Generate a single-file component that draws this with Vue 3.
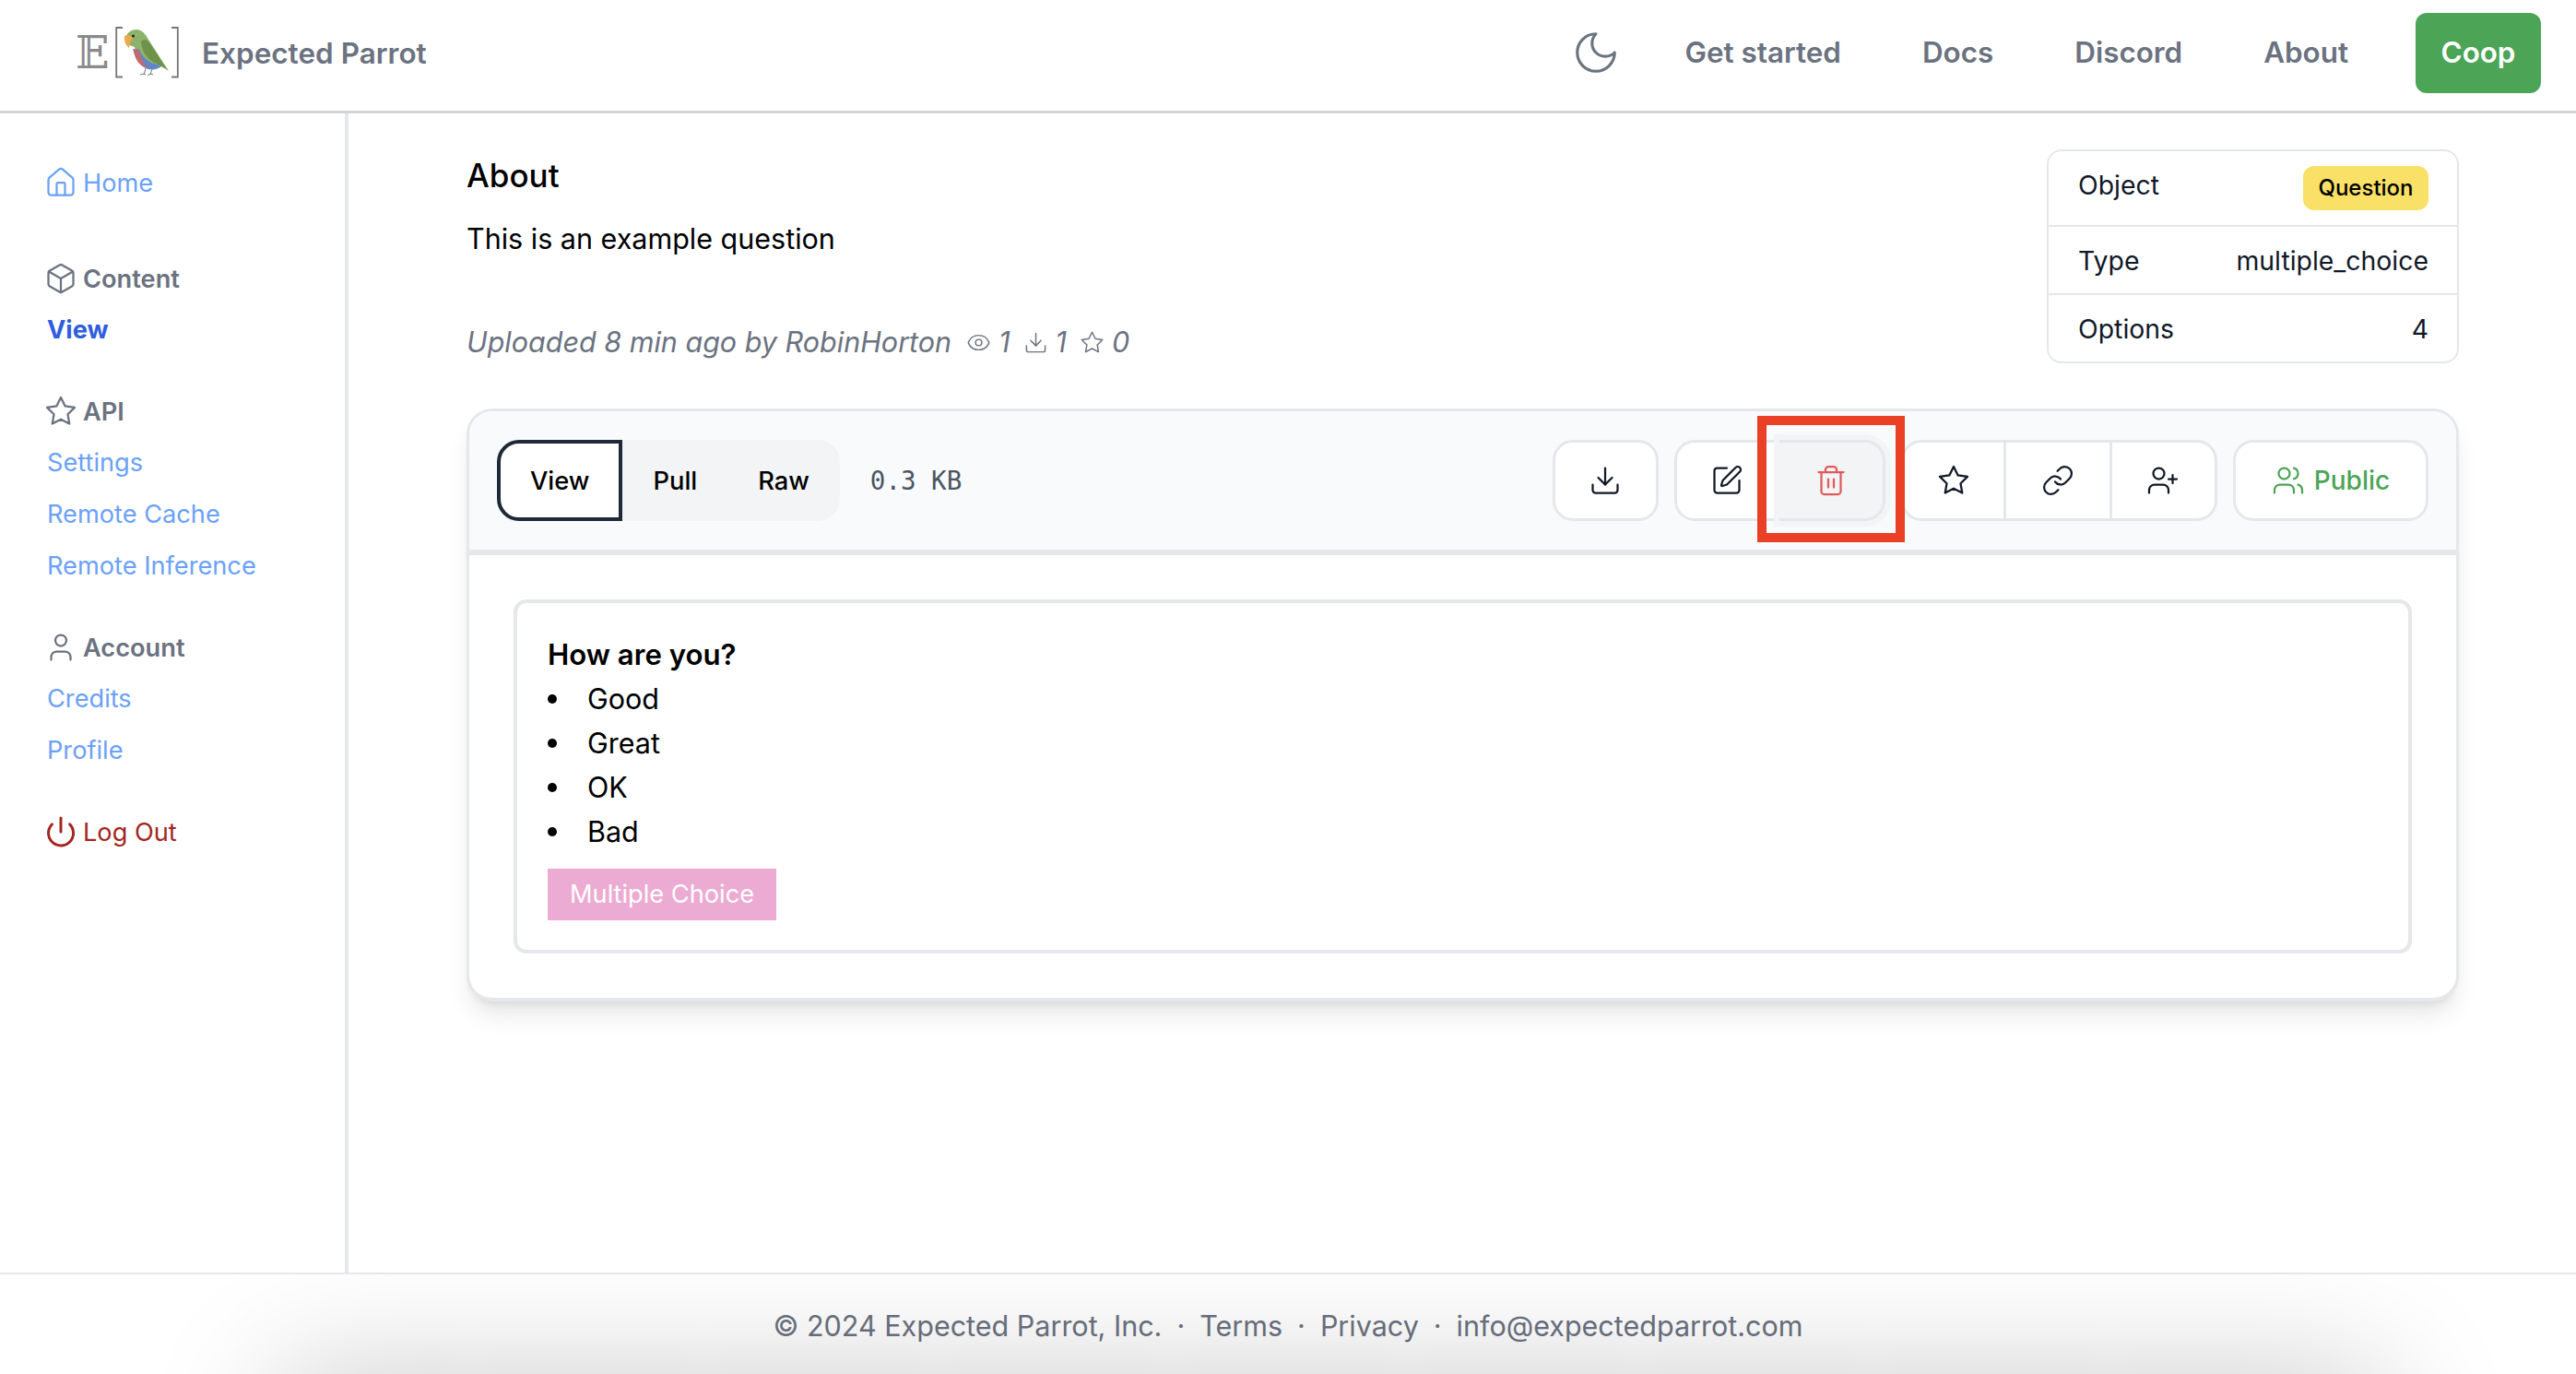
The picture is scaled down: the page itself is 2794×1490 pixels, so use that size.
<script setup>
const sections = [
  { title: "Content", links: [{ label: "View", active: true }] },
  { title: "API", links: [{ label: "Settings" }, { label: "Remote Cache" }, { label: "Remote Inference" }] },
  { title: "Account", links: [{ label: "Credits" }, { label: "Profile" }] },
];
const navLinks = ["Get started", "Docs", "Discord", "About"];
const options = ["Good", "Great", "OK", "Bad"];
</script>

<template>
  <div class="page">
    <header class="topbar">
      <a class="brand">
        <span class="logo-e">𝔼</span>
        <svg class="logo-mark" viewBox="0 0 69 56" fill="none">
          <path d="M8 1H1.2V54.5H8M61 1H67.8V54.5H61" stroke="#767676" stroke-width="1.8" />
          <path d="M11 15C11 7 17 3 23 3C29 3 33 8 36 14L58 48L50 43C46 46 40 47 35 45C28 42 22 32 21 22C16 20 11 19 11 15Z" fill="#8cb26b" />
          <path d="M19 24C22 36 28 44 36 46C41 47 46 46 50 43L46 41C38 40 30 34 26 25Z" fill="#5f87c6" />
          <path d="M20 25C21 36 27 43 35 45C31 40 27 32 25 24Z" fill="#c4686f" />
          <path d="M28 16C31 12 36 14 39 20L56 46L49 42C38 38 29 30 28 16Z" fill="#6f9249" />
          <path d="M10 10C14 8 18 10 20 13C17 14 16 17 15 23C12 21 9 15 10 10Z" fill="#eca94a" />
          <circle cx="19.5" cy="10" r="1.5" fill="#222" />
          <path d="M33 45L31 52M31 51L27 52M31 51L33 52M40 46L38 52M38 51L35 53M38 51L41 52" stroke="#777" stroke-width="1" />
        </svg>
        <span class="brand-name">Expected Parrot</span>
      </a>
      <nav class="topnav">
        <svg class="moon" viewBox="0 0 24 24" fill="none" stroke="currentColor" stroke-width="1.4" stroke-linecap="round" stroke-linejoin="round">
          <path d="M12 3a6 6 0 0 0 9 9 9 9 0 1 1-9-9Z" />
        </svg>
        <a v-for="link in navLinks" :key="link" class="nav-link">{{ link }}</a>
        <button class="coop">Coop</button>
      </nav>
    </header>

    <div class="middle">
      <aside class="sidebar">
        <a class="side-row home">
          <svg class="icon" viewBox="0 0 24 24">
            <path d="M15 21v-8a1 1 0 0 0-1-1h-4a1 1 0 0 0-1 1v8" />
            <path d="M3 10a2 2 0 0 1 .709-1.528l7-5.999a2 2 0 0 1 2.582 0l7 5.999A2 2 0 0 1 21 10v9a2 2 0 0 1-2 2H5a2 2 0 0 1-2-2z" />
          </svg>
          Home
        </a>
        <section v-for="section in sections" :key="section.title" class="side-section">
          <div class="side-row side-title">
            <svg v-if="section.title === 'Content'" class="icon" viewBox="0 0 24 24">
              <path d="M21 8a2 2 0 0 0-1-1.73l-7-4a2 2 0 0 0-2 0l-7 4A2 2 0 0 0 3 8v8a2 2 0 0 0 1 1.73l7 4a2 2 0 0 0 2 0l7-4A2 2 0 0 0 21 16Z" />
              <path d="m3.3 7 8.7 5 8.7-5" />
              <path d="M12 22V12" />
            </svg>
            <svg v-else-if="section.title === 'API'" class="icon" viewBox="0 0 24 24">
              <polygon points="12 2 15.09 8.26 22 9.27 17 14.14 18.18 21.02 12 17.77 5.82 21.02 7 14.14 2 9.27 8.91 8.26 12 2" />
            </svg>
            <svg v-else class="icon" viewBox="0 0 24 24">
              <path d="M19 21v-2a4 4 0 0 0-4-4H9a4 4 0 0 0-4 4v2" />
              <circle cx="12" cy="7" r="4" />
            </svg>
            {{ section.title }}
          </div>
          <a
            v-for="link in section.links"
            :key="link.label"
            class="side-link"
            :class="{ active: link.active }"
          >{{ link.label }}</a>
        </section>
        <a class="side-row logout">
          <svg class="icon" viewBox="0 0 24 24">
            <path d="M12 2v10" />
            <path d="M18.4 6.6a9 9 0 1 1-12.77.04" />
          </svg>
          Log Out
        </a>
      </aside>

      <main class="content">
        <div class="summary">
          <div class="about">
            <h2>About</h2>
            <p class="description">This is an example question</p>
            <p class="meta">
              Uploaded 8 min ago by RobinHorton
              <svg class="meta-icon eye" viewBox="0 0 24 24">
                <path d="M2.062 12.348a1 1 0 0 1 0-.696 10.75 10.75 0 0 1 19.876 0 1 1 0 0 1 0 .696 10.75 10.75 0 0 1-19.876 0" />
                <circle cx="12" cy="12" r="3" />
              </svg>
              <span>1</span>
              <svg class="meta-icon" viewBox="0 0 24 24">
                <path d="M21 15v4a2 2 0 0 1-2 2H5a2 2 0 0 1-2-2v-4" />
                <polyline points="7 10 12 15 17 10" />
                <line x1="12" y1="15" x2="12" y2="3" />
              </svg>
              <span>1</span>
              <svg class="meta-icon" viewBox="0 0 24 24">
                <polygon points="12 2 15.09 8.26 22 9.27 17 14.14 18.18 21.02 12 17.77 5.82 21.02 7 14.14 2 9.27 8.91 8.26 12 2" />
              </svg>
              <span>0</span>
            </p>
          </div>
          <div class="facts">
            <div class="fact first"><span>Object</span><span class="badge">Question</span></div>
            <div class="fact"><span>Type</span><span>multiple_choice</span></div>
            <div class="fact"><span>Options</span><span>4</span></div>
          </div>
        </div>

        <div class="card">
          <div class="toolbar">
            <div class="tabs">
              <button class="tab current">View</button>
              <button class="tab">Pull</button>
              <button class="tab">Raw</button>
            </div>
            <span class="size">0.3 KB</span>

            <div class="actions">
              <div class="group">
                <button class="tool">
                  <svg class="icon" viewBox="0 0 24 24">
                    <path d="M21 15v4a2 2 0 0 1-2 2H5a2 2 0 0 1-2-2v-4" />
                    <polyline points="7 10 12 15 17 10" />
                    <line x1="12" y1="15" x2="12" y2="3" />
                  </svg>
                </button>
              </div>
              <div class="group">
                <button class="tool">
                  <svg class="icon" viewBox="0 0 24 24">
                    <path d="M12 3H5a2 2 0 0 0-2 2v14a2 2 0 0 0 2 2h14a2 2 0 0 0 2-2v-7" />
                    <path d="M18.375 2.625a1 1 0 0 1 3 3l-9.013 9.014a2 2 0 0 1-.853.505l-2.873.84a.5.5 0 0 1-.62-.62l.84-2.873a2 2 0 0 1 .506-.852z" />
                  </svg>
                </button>
                <button class="tool delete">
                  <svg class="icon" viewBox="0 0 24 24">
                    <path d="M3 6h18" />
                    <path d="M19 6v14c0 1-1 2-2 2H7c-1 0-2-1-2-2V6" />
                    <path d="M8 6V4c0-1 1-2 2-2h4c1 0 2 1 2 2v2" />
                    <line x1="10" y1="11" x2="10" y2="17" />
                    <line x1="14" y1="11" x2="14" y2="17" />
                  </svg>
                  <span class="callout"></span>
                </button>
              </div>
              <div class="group">
                <button class="tool">
                  <svg class="icon" viewBox="0 0 24 24">
                    <polygon points="12 2 15.09 8.26 22 9.27 17 14.14 18.18 21.02 12 17.77 5.82 21.02 7 14.14 2 9.27 8.91 8.26 12 2" />
                  </svg>
                </button>
                <button class="tool">
                  <svg class="icon" viewBox="0 0 24 24">
                    <path d="M10 13a5 5 0 0 0 7.54.54l3-3a5 5 0 0 0-7.07-7.07l-1.72 1.71" />
                    <path d="M14 11a5 5 0 0 0-7.54-.54l-3 3a5 5 0 0 0 7.07 7.07l1.71-1.71" />
                  </svg>
                </button>
                <button class="tool">
                  <svg class="icon" viewBox="0 0 24 24">
                    <path d="M16 21v-2a4 4 0 0 0-4-4H6a4 4 0 0 0-4 4v2" />
                    <circle cx="9" cy="7" r="4" />
                    <line x1="19" y1="8" x2="19" y2="14" />
                    <line x1="22" y1="11" x2="16" y2="11" />
                  </svg>
                </button>
              </div>
              <button class="public">
                <svg class="icon" viewBox="0 0 24 24">
                  <path d="M16 21v-2a4 4 0 0 0-4-4H6a4 4 0 0 0-4 4v2" />
                  <circle cx="9" cy="7" r="4" />
                  <path d="M22 21v-2a4 4 0 0 0-3-3.87" />
                  <path d="M16 3.13a4 4 0 0 1 0 7.75" />
                </svg>
                Public
              </button>
            </div>
          </div>

          <div class="card-body">
            <div class="question">
              <div class="question-text">How are you?</div>
              <ul>
                <li v-for="option in options" :key="option">{{ option }}</li>
              </ul>
              <span class="pill">Multiple Choice</span>
            </div>
          </div>
        </div>
      </main>
    </div>

    <footer class="footer">
      <span>© 2024 Expected Parrot, Inc.</span>
      <span class="dot">·</span>
      <a>Terms</a>
      <span class="dot">·</span>
      <a>Privacy</a>
      <span class="dot">·</span>
      <a>info@expectedparrot.com</a>
    </footer>
  </div>
</template>

<style scoped>
.page {
  height: 1490px;
  display: flex;
  flex-direction: column;
  font-family: Inter, "Liberation Sans", sans-serif;
  font-size: 30.5px;
  color: #000;
  background: #fff;
  overflow: hidden;
}

.topbar {
  height: 123px;
  box-sizing: border-box;
  border-bottom: 3px solid #d1d5db;
  display: flex;
  align-items: center;
  justify-content: space-between;
  padding: 0 38px 6px 82px;
}

.brand {
  display: flex;
  align-items: center;
}

.logo-e {
  width: 35px;
  margin-right: 8px;
  font-family: "DejaVu Serif", serif;
  font-size: 48px;
  line-height: 56px;
  color: #8a8a8a;
  text-align: center;
}

.logo-mark {
  width: 69px;
  height: 56px;
  display: block;
}

.brand-name {
  margin-left: 25px;
  font-size: 31.5px;
  font-weight: 600;
  color: #6b7280;
}

.topnav {
  display: flex;
  align-items: center;
}

.moon {
  width: 54px;
  height: 54px;
  color: #6b7280;
  margin-right: 69px;
}

.nav-link {
  margin-right: 88px;
  font-size: 31.4px;
  font-weight: 600;
  color: #6b7280;
}

.nav-link:last-of-type {
  margin-right: 73px;
}

.coop {
  width: 136px;
  height: 87px;
  border: 0;
  border-radius: 12px;
  background: #4ca456;
  color: #fff;
  font: 600 31.4px Inter, sans-serif;
}

.middle {
  flex: 1;
  display: flex;
  min-height: 0;
}

.sidebar {
  width: 378px;
  box-sizing: border-box;
  flex-shrink: 0;
  border-right: 4px solid #e5e7eb;
  padding: 47px 0 0 51px;
  font-size: 27.2px;
}

.icon {
  width: 36px;
  height: 36px;
  flex-shrink: 0;
  fill: none;
  stroke: currentColor;
  stroke-width: 1.5;
  stroke-linecap: round;
  stroke-linejoin: round;
}

.side-row {
  height: 56px;
  margin-left: -3px;
  display: flex;
  align-items: center;
  gap: 6px;
}

.home {
  color: #6ba1f7;
  margin-bottom: 48px;
}

.side-section {
  margin-bottom: 32px;
}

.side-title {
  font-weight: 600;
  color: #6b7280;
}

.side-link {
  display: block;
  height: 56px;
  line-height: 56px;
  color: #6ba1f7;
}

.side-link.active {
  font-weight: 700;
  color: #2f5de0;
}

.logout {
  color: #a3261f;
}

.logout .icon {
  stroke-width: 2;
}

.content {
  flex: 1;
  padding: 40px 127px 0 128px;
  min-width: 0;
}

.summary {
  display: flex;
  justify-content: space-between;
  align-items: flex-start;
  height: 280px;
}

.about h2 {
  margin: 2px 0 0;
  font-size: 35px;
  font-weight: 500;
  line-height: 50px;
}

.description {
  margin: 19px 0 0;
  line-height: 50px;
}

.meta {
  margin: 62px 0 0;
  line-height: 50px;
  font-style: italic;
  color: #6b7280;
  display: flex;
  align-items: center;
  gap: 8px;
}

.meta-icon {
  width: 27px;
  height: 27px;
  margin-left: 6px;
  fill: none;
  stroke: currentColor;
  stroke-width: 1.3;
  stroke-linecap: round;
  stroke-linejoin: round;
}

.meta-icon.eye {
  margin-left: 8px;
}

.facts {
  width: 447px;
  box-sizing: border-box;
  margin-top: -1px;
  border: 2px solid #e5e7eb;
  border-radius: 16px;
  font-size: 28.4px;
  color: #111827;
}

.fact {
  height: 72px;
  padding: 0 31px 0 32px;
  display: flex;
  align-items: center;
  justify-content: space-between;
  border-top: 2px solid #e5e7eb;
}

.fact.first {
  height: 80px;
  border-top: 0;
}

.fact.first span:first-child {
  margin-top: -8px;
}

.badge {
  width: 136px;
  height: 48px;
  border-radius: 12px;
  background: #f9e066;
  color: #000;
  font-size: 24px;
  font-weight: 500;
  line-height: 48px;
  text-align: center;
}

.card {
  border: 3px solid #e5e7eb;
  border-bottom-width: 4px;
  border-radius: 28px;
  background: #fff;
  overflow: visible;
  box-shadow: 0 18px 27px -5px rgba(0, 0, 0, 0.1), 0 7px 10px -6px rgba(0, 0, 0, 0.1);
}

.toolbar {
  height: 150px;
  box-sizing: content-box;
  padding: 0 30px;
  border-bottom: 6px solid #e5e7eb;
  border-radius: 25px 25px 0 0;
  background: #f9fafb;
  display: flex;
  align-items: center;
}

.tabs {
  display: flex;
  height: 88px;
  border-radius: 24px;
  background: #f3f4f6;
}

.tab {
  padding: 0 33px;
  border: 0;
  background: transparent;
  color: #000;
  font: 500 27.3px Inter, sans-serif;
  border-radius: 0 24px 24px 0;
}

.tab.current {
  padding: 0 32px;
  border: 4px solid #1f2937;
  border-radius: 24px 0 0 24px;
  background: #fff;
}

.size {
  margin-left: 33px;
  font-family: "DejaVu Sans Mono", monospace;
  font-size: 27.5px;
  color: #4b5563;
}

.actions {
  margin-left: auto;
  display: flex;
  gap: 17px;
}

.group {
  display: flex;
}

.tool {
  position: relative;
  width: 114.5px;
  height: 88px;
  padding: 0;
  border: 3px solid #e5e7eb;
  border-left-width: 0;
  background: #fff;
  color: #111827;
  display: flex;
  align-items: center;
  justify-content: center;
}

.tool:first-child {
  border-left-width: 3px;
  border-radius: 22px 0 0 22px;
}

.tool:last-child {
  border-radius: 0 22px 22px 0;
}

.tool:only-child {
  width: 115px;
  border-radius: 22px;
}

.tool.delete {
  z-index: 1;
  background: #f3f4f6;
  color: #e25a5a;
  box-shadow: 0 0 0 6px #f3f4f6;
}

.callout {
  position: absolute;
  left: -24px;
  top: -29px;
  width: 160px;
  height: 137px;
  box-sizing: border-box;
  border: 10px solid #ea4025;
  pointer-events: none;
}

.public {
  width: 212px;
  height: 88px;
  border: 3px solid #e5e7eb;
  border-radius: 22px;
  background: #fff;
  color: #4ca456;
  font: 500 28px Inter, sans-serif;
  display: flex;
  align-items: center;
  justify-content: center;
  gap: 10px;
}

.card-body {
  padding: 48px;
}

.question {
  border: 4px solid #e5e7eb;
  border-radius: 14px;
  padding: 32px 33px;
  line-height: 48px;
}

.question-text {
  font-size: 31.2px;
  font-weight: 600;
}

ul {
  margin: 0 0 16px;
  padding: 0;
  list-style: none;
}

li {
  display: flex;
  align-items: center;
}

li::before {
  content: "";
  width: 10px;
  height: 10px;
  margin-right: 33px;
  border-radius: 50%;
  background: #000;
}

.pill {
  display: inline-block;
  height: 56px;
  padding: 0 24px;
  background: #ecabd2;
  color: #fff;
  font-size: 27.2px;
  line-height: 56px;
  vertical-align: top;
}

.footer {
  position: relative;
  height: 110px;
  box-sizing: border-box;
  border-top: 2px solid #e5e7eb;
  display: flex;
  align-items: center;
  justify-content: center;
  gap: 16px;
  color: #6b7280;
  overflow: hidden;
  padding-top: 3px;
}

.footer::after {
  content: "";
  position: absolute;
  left: 303px;
  right: 210px;
  top: 110px;
  height: 200px;
  box-shadow: 0 0 140px rgba(0, 0, 0, 0.22);
}
</style>

<style>
html,
body {
  margin: 0;
  background: #fff;
}
</style>
